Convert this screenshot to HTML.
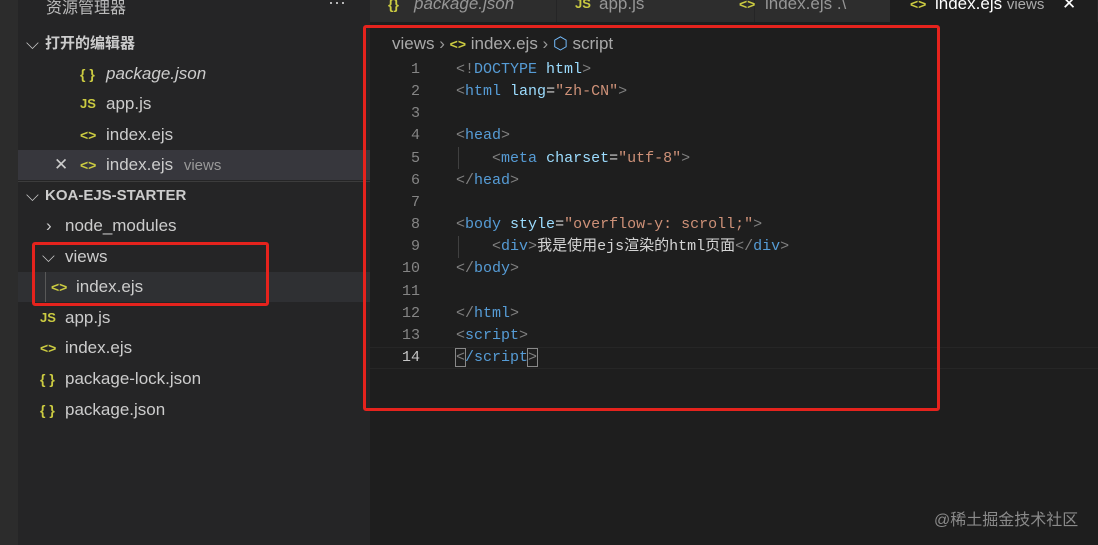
<!DOCTYPE html>
<html><head><meta charset="utf-8"><style>
*{margin:0;padding:0;box-sizing:border-box}
body{width:1098px;height:545px;overflow:hidden;background:#1e1e1e;position:relative;font-family:"Liberation Sans","Noto Sans CJK SC",sans-serif;color:#cccccc}
.a{position:absolute;white-space:nowrap}
.act{left:0;top:0;width:18px;height:545px;background:#2c2c2c}
.side{left:18px;top:0;width:352px;height:545px;background:#252526}
.row{position:absolute;left:18px;width:352px;height:30px;font-size:17px;line-height:30px}
.ic{color:#cbcb41;font-weight:bold;font-size:14px}
.js{color:#cbcb41;font-weight:bold;font-size:13px}
.mono{font-family:"Liberation Mono","Noto Sans CJK SC",monospace;font-size:15px}
.ln{position:absolute;width:40px;left:380px;text-align:right;color:#858585}
.code{position:absolute;left:456px}
.t{color:#569cd6}.p{color:#808080}.at{color:#9cdcfe}.s{color:#ce9178}.w{color:#d4d4d4}
.tab{position:absolute;top:0;height:22px;background:#2d2d2d;font-size:17px;line-height:12px;color:#969696;border-right:1px solid #252526}
</style></head><body>
<div class="a act"></div>
<div class="a side"></div>
<div class="a" style="left:46px;top:-6px;font-size:16px;color:#bbb">资源管理器</div>
<div class="a" style="left:328px;top:-8px;font-size:18px;color:#ccc">···</div>
<div class="row" style="top:29px"><span class="a" style="left:8px;color:#ccc">⌵</span><span class="a" style="left:27px;font-weight:bold;font-size:15px">打开的编辑器</span></div>
<div class="row" style="top:59px"><span class="a ic" style="left:62px">{ }</span><span class="a" style="left:88px;font-style:italic">package.json</span></div>
<div class="row" style="top:89px"><span class="a js" style="left:62px">JS</span><span class="a" style="left:88px">app.js</span></div>
<div class="row" style="top:120px"><span class="a ic" style="left:62px">&lt;&gt;</span><span class="a" style="left:88px">index.ejs</span></div>
<div class="row" style="top:150px;background:#37373d"><span class="a" style="left:36px">✕</span><span class="a ic" style="left:62px">&lt;&gt;</span><span class="a" style="left:88px">index.ejs <span style="font-size:15px;color:#999;margin-left:6px">views</span></span></div>
<div class="a" style="left:18px;top:181px;width:352px;height:1px;background:#3c3c3c"></div>
<div class="row" style="top:181px"><span class="a" style="left:8px">⌵</span><span class="a" style="left:27px;font-weight:bold;font-size:15px">KOA-EJS-STARTER</span></div>
<div class="row" style="top:211px"><span class="a" style="left:28px">›</span><span class="a" style="left:47px">node_modules</span></div>
<div class="row" style="top:242px"><span class="a" style="left:24px">⌵</span><span class="a" style="left:47px">views</span></div>
<div class="row" style="top:272px;background:#2f3033"><span class="a" style="left:27px;top:0;width:1px;height:30px;background:#585858"></span><span class="a ic" style="left:33px">&lt;&gt;</span><span class="a" style="left:58px">index.ejs</span></div>
<div class="row" style="top:303px"><span class="a js" style="left:22px">JS</span><span class="a" style="left:47px">app.js</span></div>
<div class="row" style="top:333px"><span class="a ic" style="left:22px">&lt;&gt;</span><span class="a" style="left:47px">index.ejs</span></div>
<div class="row" style="top:364px"><span class="a ic" style="left:22px">{ }</span><span class="a" style="left:47px">package-lock.json</span></div>
<div class="row" style="top:395px"><span class="a ic" style="left:22px">{ }</span><span class="a" style="left:47px">package.json</span></div>

<div class="a" style="left:370px;top:0;width:728px;height:22px;background:#252526"></div>
<div class="tab" style="left:370px;width:187px"><span class="a ic" style="left:18px;top:-2px">{}</span><span class="a" style="left:44px;top:-2px;font-style:italic">package.json</span></div>
<div class="tab" style="left:557px;width:198px"><span class="a js" style="left:18px;top:-2px">JS</span><span class="a" style="left:42px;top:-2px">app.js</span></div>
<div class="tab" style="left:755px;width:136px"><span class="a ic" style="left:-16px;top:-2px">&lt;&gt;</span><span class="a" style="left:10px;top:-2px">index.ejs .\</span></div>
<div class="tab" style="left:890px;width:208px;background:#1e1e1e;color:#fff"><span class="a ic" style="left:20px;top:-2px">&lt;&gt;</span><span class="a" style="left:45px;top:-2px">index.ejs <span style="font-size:15px;color:#aaa">views</span></span><span class="a" style="left:172px;top:-2px">✕</span></div>

<div class="a" style="left:392px;top:33px;font-size:17px;line-height:22px;color:#a9a9a9">views <span style="color:#999">›</span> <span class="ic">&lt;&gt;</span> index.ejs <span style="color:#999">›</span> <span style="color:#75beff">⬡</span> script</div>

<div class="mono">
<div class="a" style="left:363px;top:347px;width:735px;height:22px;border-top:1px solid #262626;border-bottom:1px solid #262626"></div>
<div class="ln" style="top:59px;line-height:22.15px">1<br>2<br>3<br>4<br>5<br>6<br>7<br>8<br>9<br>10<br>11<br>12<br>13<br><span style="color:#c6c6c6">14</span></div>
<div class="a" style="left:458px;top:147px;width:1px;height:22px;background:#404040"></div>
<div class="a" style="left:458px;top:236px;width:1px;height:22px;background:#404040"></div>
<div class="code" style="top:59px;line-height:22.15px;white-space:pre"><span class="p">&lt;!</span><span class="t">DOCTYPE</span> <span class="at">html</span><span class="p">&gt;</span>
<span class="p">&lt;</span><span class="t">html</span> <span class="at">lang</span><span class="w">=</span><span class="s">"zh-CN"</span><span class="p">&gt;</span>

<span class="p">&lt;</span><span class="t">head</span><span class="p">&gt;</span>
    <span class="p">&lt;</span><span class="t">meta</span> <span class="at">charset</span><span class="w">=</span><span class="s">"utf-8"</span><span class="p">&gt;</span>
<span class="p">&lt;/</span><span class="t">head</span><span class="p">&gt;</span>

<span class="p">&lt;</span><span class="t">body</span> <span class="at">style</span><span class="w">=</span><span class="s">"overflow-y: scroll;"</span><span class="p">&gt;</span>
    <span class="p">&lt;</span><span class="t">div</span><span class="p">&gt;</span><span class="w">我是使用ejs渲染的html页面</span><span class="p">&lt;/</span><span class="t">div</span><span class="p">&gt;</span>
<span class="p">&lt;/</span><span class="t">body</span><span class="p">&gt;</span>

<span class="p">&lt;/</span><span class="t">html</span><span class="p">&gt;</span>
<span class="p">&lt;</span><span class="t">script</span><span class="p">&gt;</span>
<span class="p" style="outline:1px solid #888">&lt;</span><span class="t">/script</span><span class="p" style="outline:1px solid #888">&gt;</span></div>
</div>

<div class="a" style="left:363px;top:25px;width:577px;height:386px;border:3px solid #e5231d;border-radius:3px"></div>
<div class="a" style="left:32px;top:242px;width:237px;height:64px;border:3px solid #e5231d;border-radius:3px"></div>
<div class="a" style="left:934px;top:506px;font-size:16px;color:#8a8a8a">@稀土掘金技术社区</div>
</body></html>
